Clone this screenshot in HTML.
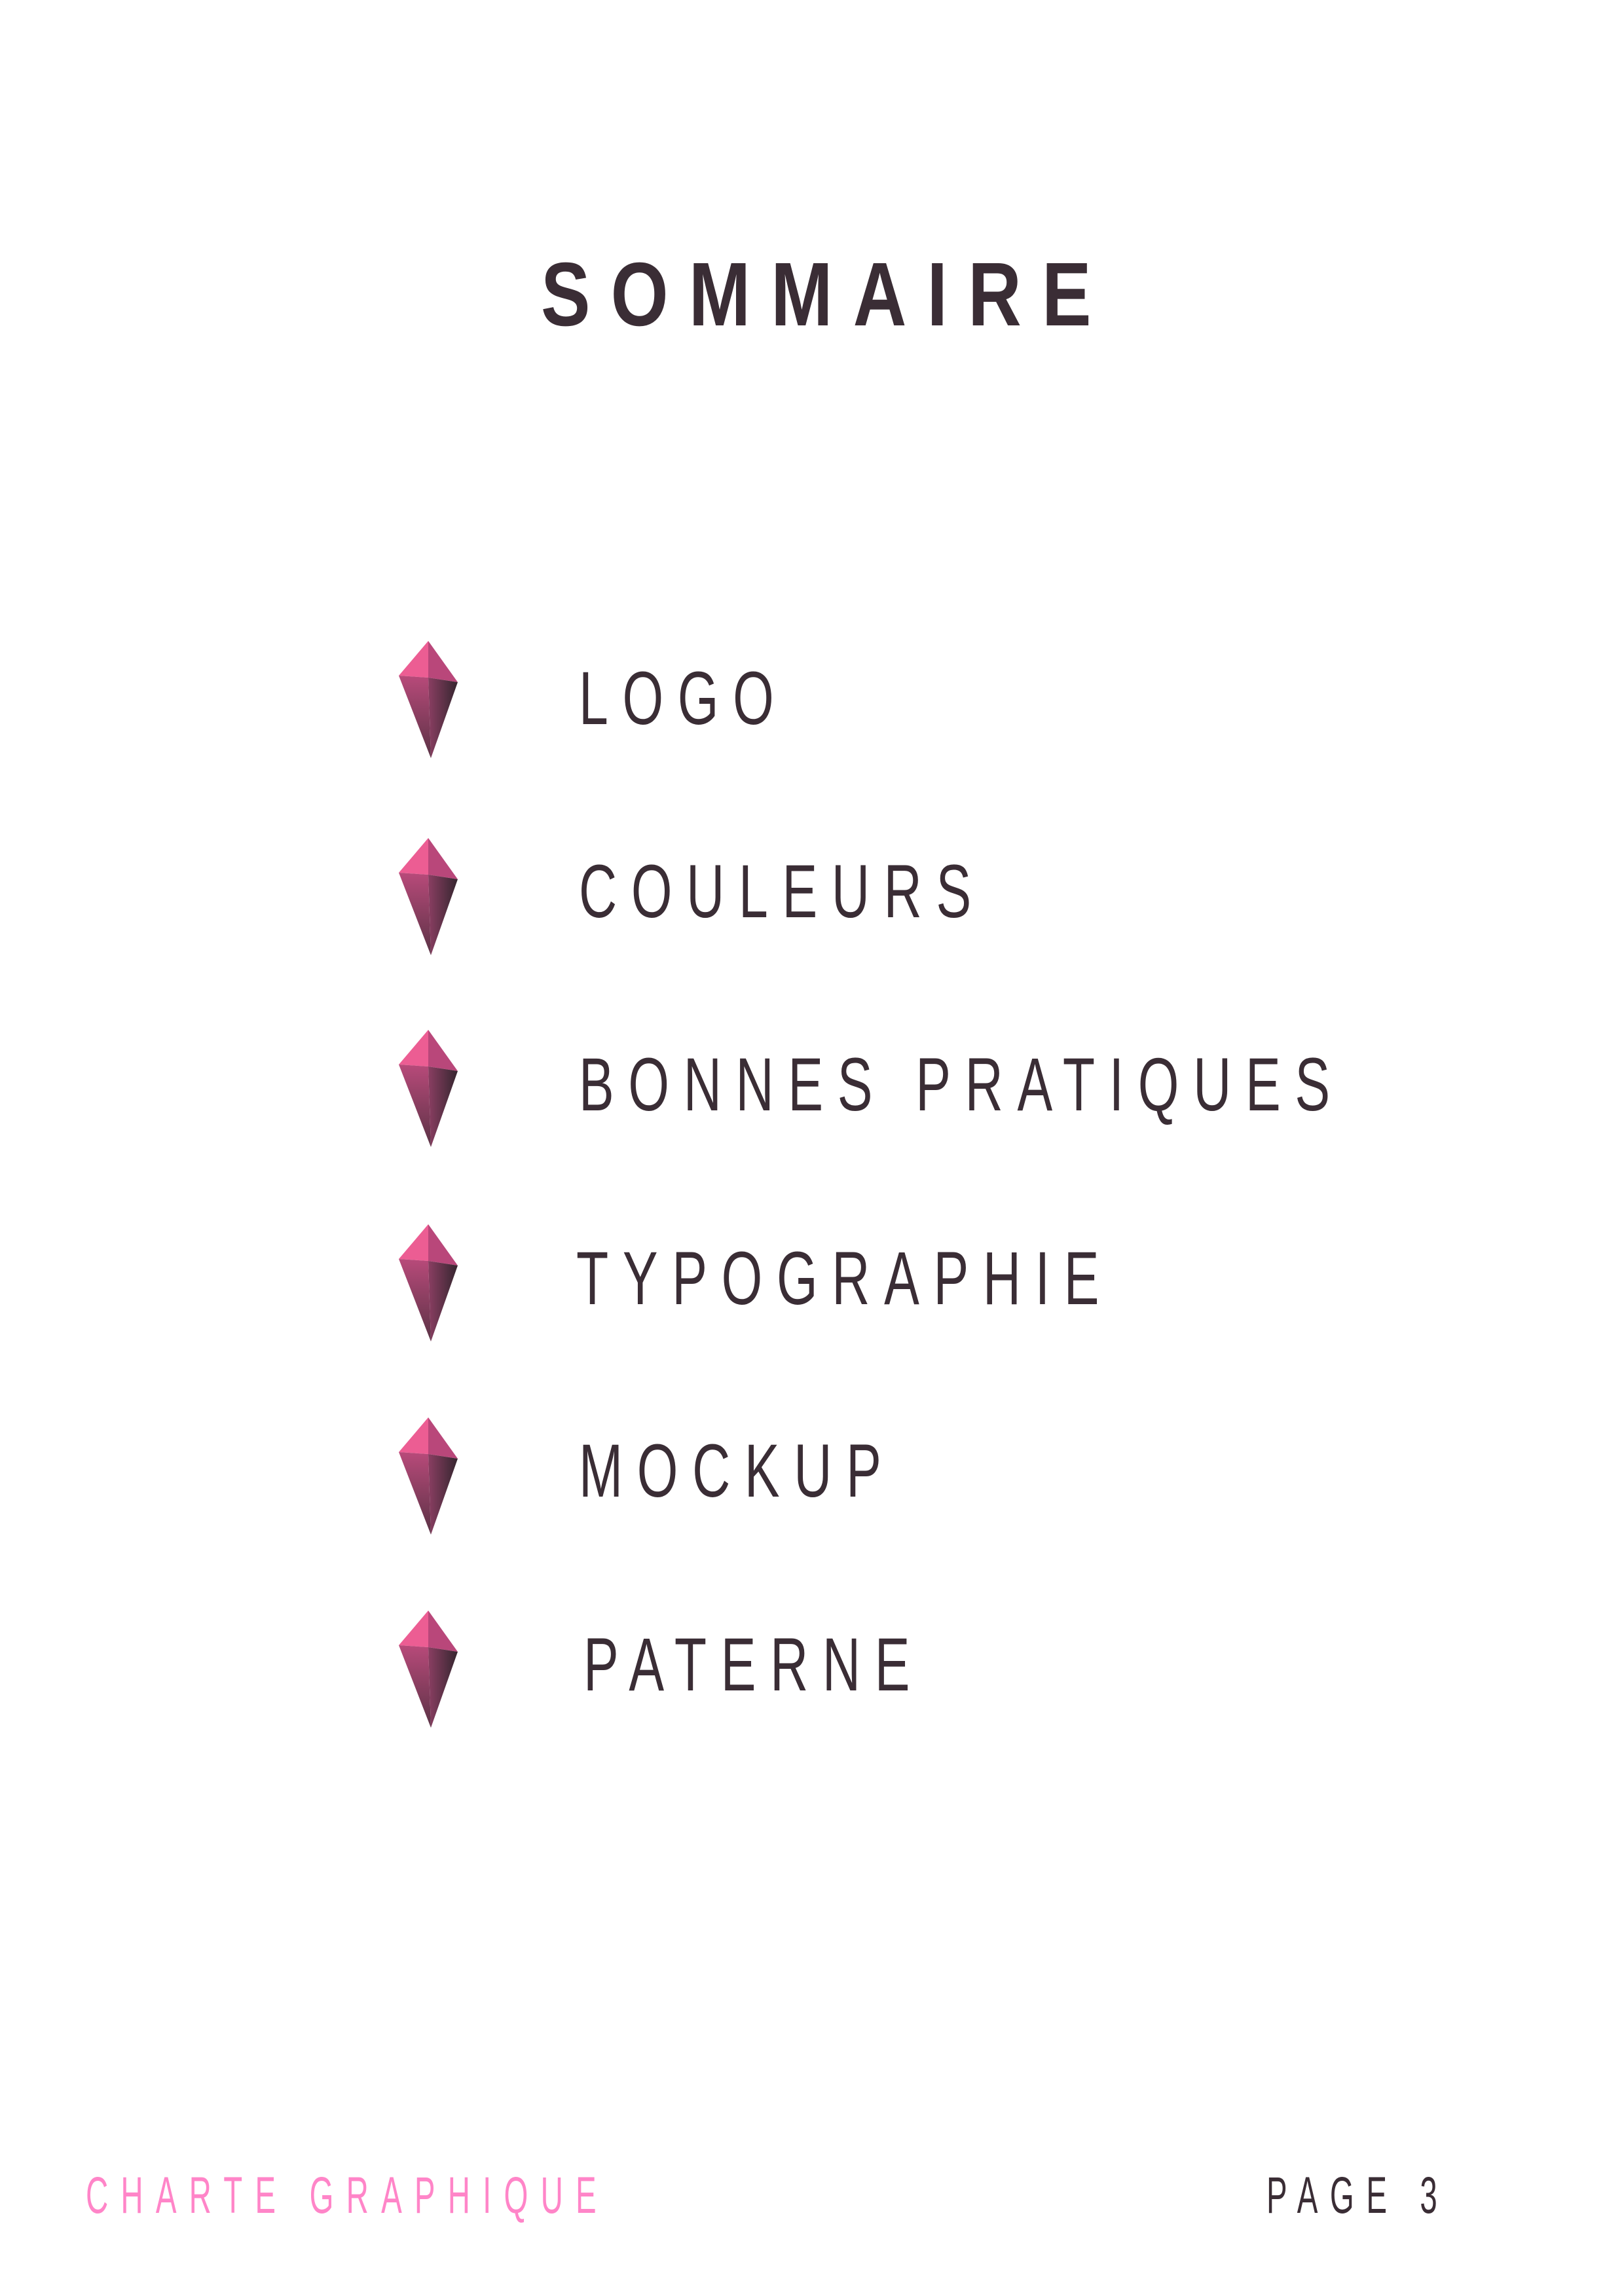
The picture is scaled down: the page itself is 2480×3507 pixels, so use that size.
<!DOCTYPE html>
<html><head><meta charset="utf-8"><style>
html,body{margin:0;padding:0;background:#fff;}
body{width:2480px;height:3507px;position:relative;overflow:hidden;font-family:"Liberation Sans",sans-serif;color:#3a2d35;}
.t{position:absolute;white-space:nowrap;line-height:1;transform-origin:0 0;}
.title{left:826px;top:381px;font-size:138px;font-weight:bold;letter-spacing:38px;transform:scaleX(0.82);}
.item{left:884px;font-size:115px;letter-spacing:31px;transform:scaleX(0.7);}
.foot{top:3313px;font-size:79px;transform:scaleX(0.6);}
.gem{position:absolute;left:609px;width:90px;height:180px;}
</style></head><body>
<svg width="0" height="0" style="position:absolute"><defs>
<linearGradient id="lr" x1="0" y1="0" x2="1" y2="0"><stop offset="0" stop-color="#8a3e62"/><stop offset="1" stop-color="#35262f"/></linearGradient>
<linearGradient id="ll" x1="0" y1="0" x2="0" y2="1"><stop offset="0" stop-color="#b84a7a"/><stop offset="1" stop-color="#5a3245"/></linearGradient>
</defs></svg>
<div class="t title">SOMMAIRE</div>

<svg class="gem" style="top:979px" viewBox="0 0 90 180" preserveAspectRatio="none"><polygon points="45,0 0,53 45,56" fill="#ec5d93"/><polygon points="45,0 90,63 45,56" fill="#b9477a"/><polygon points="0,53 45,56 49,179" fill="url(#ll)"/><polygon points="45,56 90,63 49,179" fill="url(#lr)"/></svg>
<div class="t item" style="top:1010px">LOGO</div>

<svg class="gem" style="top:1280px" viewBox="0 0 90 180" preserveAspectRatio="none"><polygon points="45,0 0,53 45,56" fill="#ec5d93"/><polygon points="45,0 90,63 45,56" fill="#b9477a"/><polygon points="0,53 45,56 49,179" fill="url(#ll)"/><polygon points="45,56 90,63 49,179" fill="url(#lr)"/></svg>
<div class="t item" style="top:1305px">COULEURS</div>

<svg class="gem" style="top:1573px" viewBox="0 0 90 180" preserveAspectRatio="none"><polygon points="45,0 0,53 45,56" fill="#ec5d93"/><polygon points="45,0 90,63 45,56" fill="#b9477a"/><polygon points="0,53 45,56 49,179" fill="url(#ll)"/><polygon points="45,56 90,63 49,179" fill="url(#lr)"/></svg>
<div class="t item" style="top:1600px">BONNES PRATIQUES</div>

<svg class="gem" style="top:1870px" viewBox="0 0 90 180" preserveAspectRatio="none"><polygon points="45,0 0,53 45,56" fill="#ec5d93"/><polygon points="45,0 90,63 45,56" fill="#b9477a"/><polygon points="0,53 45,56 49,179" fill="url(#ll)"/><polygon points="45,56 90,63 49,179" fill="url(#lr)"/></svg>
<div class="t item" style="top:1896px;left:880px">TYPOGRAPHIE</div>

<svg class="gem" style="top:2165px" viewBox="0 0 90 180" preserveAspectRatio="none"><polygon points="45,0 0,53 45,56" fill="#ec5d93"/><polygon points="45,0 90,63 45,56" fill="#b9477a"/><polygon points="0,53 45,56 49,179" fill="url(#ll)"/><polygon points="45,56 90,63 49,179" fill="url(#lr)"/></svg>
<div class="t item" style="top:2190px">MOCKUP</div>

<svg class="gem" style="top:2460px" viewBox="0 0 90 180" preserveAspectRatio="none"><polygon points="45,0 0,53 45,56" fill="#ec5d93"/><polygon points="45,0 90,63 45,56" fill="#b9477a"/><polygon points="0,53 45,56 49,179" fill="url(#ll)"/><polygon points="45,56 90,63 49,179" fill="url(#lr)"/></svg>
<div class="t item" style="top:2486px;left:891px">PATERNE</div>

<div class="t foot" style="left:131px;color:#ff85c8;letter-spacing:32px">CHARTE GRAPHIQUE</div>
<div class="t foot" style="left:1934px;letter-spacing:31px">PAGE 3</div>
</body></html>
